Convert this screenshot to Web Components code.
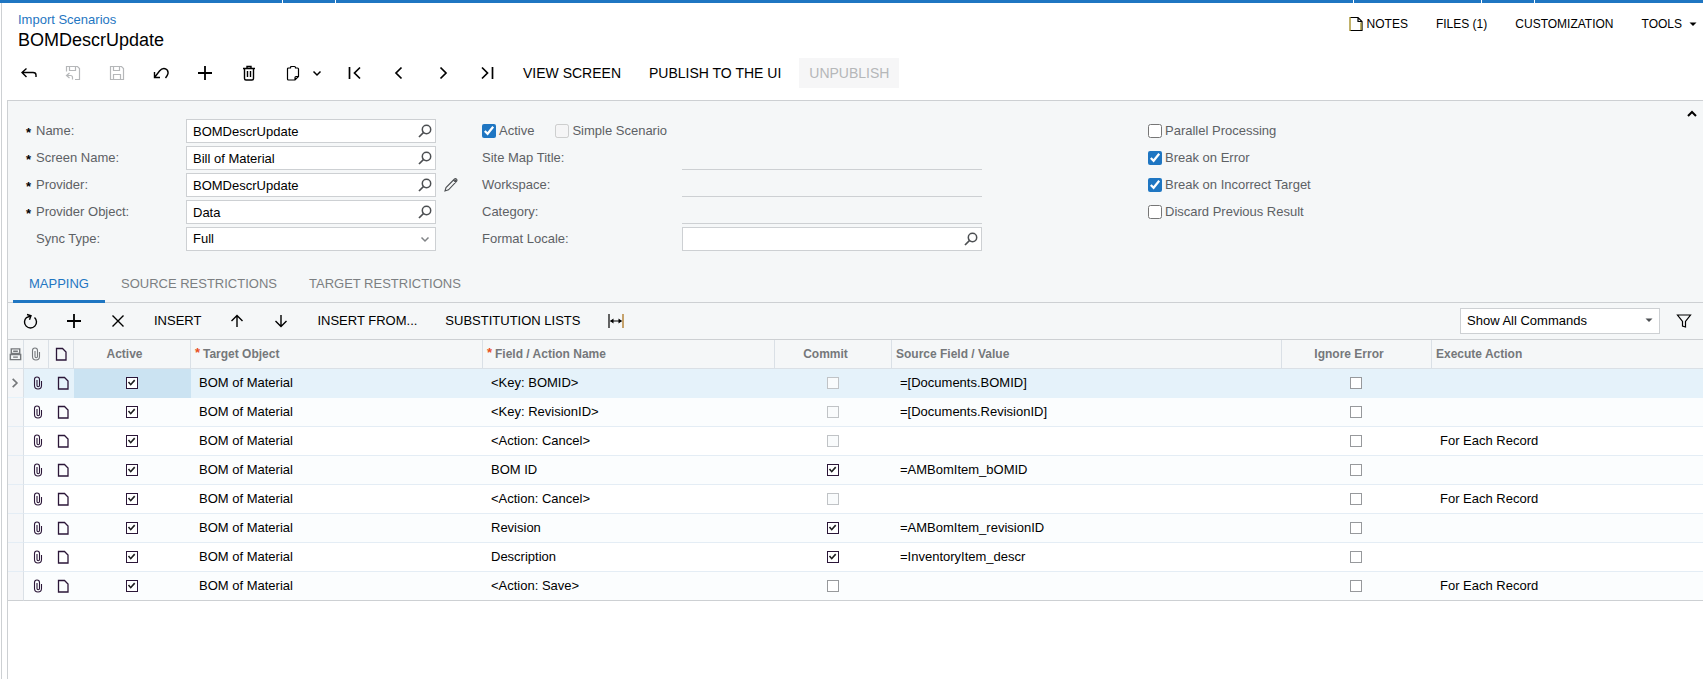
<!DOCTYPE html>
<html lang="en">
<head>
<meta charset="utf-8">
<title>Import Scenarios</title>
<style>
  body {
    margin: 0;
    background: #fff;
    color: #000;
    font: 13px/16px "Liberation Sans", Arial, sans-serif;
    --accent: #1f76c2;
    --line: #cdd0d3;
    --panel: #f5f7f8;
    --muted: #5d6165;
  }
</style>
</head>
<body>
<app-frame>
  <screen-header heading="BOMDescrUpdate" parent="Import Scenarios"></screen-header>
  <tool-bar>
    <tool-button icon="back" label="Back"></tool-button>
    <tool-button icon="saveclose" label="Save and close" disabled></tool-button>
    <tool-button icon="save" label="Save" disabled></tool-button>
    <tool-button icon="undo" label="Undo"></tool-button>
    <tool-button icon="plus" label="Add record"></tool-button>
    <tool-button icon="trash" label="Delete"></tool-button>
    <tool-button icon="clipboard" label="Clipboard" menu></tool-button>
    <tool-button icon="first" label="First"></tool-button>
    <tool-button icon="prev" label="Previous"></tool-button>
    <tool-button icon="next" label="Next"></tool-button>
    <tool-button icon="last" label="Last"></tool-button>
    <tool-button>VIEW SCREEN</tool-button>
    <tool-button>PUBLISH TO THE UI</tool-button>
    <tool-button disabled>UNPUBLISH</tool-button>
  </tool-bar>
  <scenario-panel slot="panel">
    <scenario-form></scenario-form>
    <tab-strip></tab-strip>
    <tool-bar compact>
      <tool-button icon="refresh" label="Refresh"></tool-button>
      <tool-button icon="plus" label="Add row"></tool-button>
      <tool-button icon="cross" label="Delete row"></tool-button>
      <tool-button>INSERT</tool-button>
      <tool-button icon="up" label="Move up"></tool-button>
      <tool-button icon="down" label="Move down"></tool-button>
      <tool-button>INSERT FROM...</tool-button>
      <tool-button>SUBSTITUTION LISTS</tool-button>
      <tool-button icon="fit" label="Fit to screen"></tool-button>
      <command-filter slot="end"></command-filter>
      <tool-button slot="end" icon="filter" label="Filter settings"></tool-button>
    </tool-bar>
    <mapping-grid></mapping-grid>
  </scenario-panel>
</app-frame>

<script>
const ICONS = {
  back: '<path d="M5.5 3.5L1 7.5l4.5 4.5M1 7.5h11q3 0 3 2.5v2"/>',
  saveclose: '<path stroke-width="1.2" d="M1.5 6.5v-5h11l2 2v11H10M4.5 1.5v4h6v-4M4.5 8L1.5 10.5l3 2.5M1.5 10.5h4q2 0 2 2v2"/>',
  save: '<path stroke-width="1.2" d="M1.5 1.5h11l2 2v11h-13zM4.5 1.5v4h6v-4M4.5 14.5v-5h7v5"/>',
  undo: '<path d="M1.5 7v5.5H7M1.5 12.5L6.5 6Q9 3 12 3.7 15.5 5 15 8.5 14.5 10.5 12.5 13"/>',
  plus: '<path stroke-width="1.8" d="M8 1v14M1 8h14"/>',
  trash: '<path d="M2 3.5h12M6 3V1.5h4V3M3.5 3.5v10q0 1.5 1.5 1.5h6q1.5 0 1.5-1.5v-10M6.5 6v6M9.5 6v6"/>',
  clipboard: '<path stroke-width="1.2" d="M5.500 3H3.5q-1 0-1 1v10q0 1 1 1h6.500l3.500-3.500V4q0-1-1-1h-2M5.500 3.500v-1q0-1 1-1h3q1 0 1 1v1M10 15v-2.500q0-1 1-1h2.500"/>',
  chevron: '<path stroke-width="1.5" d="M4.5 6.5L8 10l3.5-3.5"/>',
  collapse: '<path stroke-width="2" d="M4 10l4-4 4 4"/>',
  first: '<path stroke-width="1.7" d="M2.5 2v12M13 2.5L7.5 8l5.5 5.5"/>',
  prev: '<path stroke-width="1.7" d="M10.5 2.5L5 8l5.5 5.5"/>',
  next: '<path stroke-width="1.7" d="M5.5 2.5L11 8l-5.5 5.5"/>',
  last: '<path stroke-width="1.7" d="M13.5 2v12M3 2.5L8.5 8 3 13.5"/>',
  refresh: '<path d="M12.5 4.5A6 6 0 1 1 4.500 4.500L8.500 3M5 1.5l4 1.300-1.500 4"/>',
  cross: '<path d="M2.5 2.5l11 11M13.5 2.5l-11 11"/>',
  up: '<path d="M8 14V2.5M2.5 8L8 2.5 13.5 8"/>',
  down: '<path d="M8 2v11.5M2.5 8L8 13.5 13.5 8"/>',
  fit: '<path stroke-width="1.2" d="M1 1v14M2.5 8h11"/><path stroke="#a5690f" stroke-width="1.2" d="M15 1v14"/><path fill="currentColor" stroke="none" d="M2 8l3.5-2.5v5zM14 8l-3.5-2.5v5z"/>',
  filter: '<path stroke-width="1.2" d="M1.5 2h13l-5 6.5V14l-3-1V8.5z"/>',
  search: '<circle cx="9.5" cy="6.5" r="4.2" stroke-width="1.5"/><path stroke-width="1.7" d="M6.5 9.5L2 14"/>',
  pencil: '<path stroke-width="1.1" d="M2 14l1-3.5L11.5 2q1-.8 2 .2t.2 2L5.5 12.8zM10.5 3l2.5 2.500"/><path stroke-width="2" d="M12 3l1.200 1.200"/>',
  clip: '<path stroke-width="1.1" d="M9.500 10.500v-6a2.500 2.500 0 0 0-5 0v6a3.500 3.500 0 0 0 7 0V6M7 5v5.500a1.250 1.250 0 0 0 2.500 0"/>',
  note: '<path stroke-width="1.3" d="M3.5 2.5h6L13 6v8H3.5z"/>',
  notes: '<path stroke-width="1.2" d="M2 1.5h8L14 5.5v9H2M10 1.5v4h4"/><path stroke="#a8922c" stroke-width="1.4" d="M2 1v14M13 6.500V14"/>',
  caret: '<path fill="currentColor" stroke="none" d="M4.5 6.5h7L8 10z"/>',
  rows: '<path d="M3.500 2.5h9v5h-9zM2.5 8.500h11v5.500h-11zM5.500 5h5M5.500 11.300h5" stroke-width="1.500"/>',
  current: '<path stroke-width="1.8" d="M5 3.500L9.500 8 5 12.500"/>'
};

class IconGlyph extends HTMLElement {
  connectedCallback() {
    this.attachShadow({mode: 'open'}).innerHTML = `
      <style>
        :host { display: inline-flex; flex: none; width: 16px; height: 16px; }
      </style>
      <svg width="16" height="16" viewBox="0 0 16 16" fill="none" stroke="currentColor"
        stroke-width="1.4" aria-hidden="true">${ICONS[this.getAttribute('name')]}</svg>
    `;
  }
}
customElements.define('icon-glyph', IconGlyph);

class AppFrame extends HTMLElement {
  constructor() {
    super();
    this.attachShadow({mode: 'open'}).innerHTML = `
      <style>
        :host { display: flex; flex-direction: column; min-height: 100vh; }
        .strip { display: flex; height: 3px; background: var(--accent); }
        .strip i { width: 52px; border-right: 1px solid #fff; }
        .strip i.wide { width: 127px; }
        .strip i.first { width: 282px; }
        .strip i.fill { flex: 1; }
        .strip i.end { width: 168px; border: 0; }
        main {
          flex: 1;
          display: flex;
          flex-direction: column;
          margin-left: 1px;
          padding-left: 5px;
          border-left: 1px solid var(--line);
        }
      </style>
      <div class="strip">
        <i class="first"></i><i></i><i class="fill"></i><i class="wide"></i><i></i><i class="end"></i>
      </div>
      <main><slot></slot><slot name="panel"></slot></main>
    `;
  }
}
customElements.define('app-frame', AppFrame);

class ScreenHeader extends HTMLElement {
  connectedCallback() {
    this.attachShadow({mode: 'open'}).innerHTML = `
      <style>
        :host {
          display: flex;
          justify-content: space-between;
          align-items: flex-start;
          padding: 9px 6px 0 11px;
        }
        a { color: var(--accent); text-decoration: none; }
        h1 { margin: 1px 0 0; font-size: 18px; line-height: 22px; font-weight: normal; }
        nav { display: flex; gap: 28px; padding-top: 4px; }
        nav button {
          display: flex;
          align-items: center;
          gap: 3px;
          padding: 0;
          border: 0;
          background: none;
          color: #000;
          font: 12px/16px "Liberation Sans", Arial, sans-serif;
        }
        nav [name=caret] { margin-right: -4px; }
      </style>
      <div>
        <a href="#">${this.getAttribute('parent')}</a>
        <h1>${this.getAttribute('heading')}</h1>
      </div>
      <nav>
        <button><icon-glyph name="notes"></icon-glyph>NOTES</button>
        <button>FILES (1)</button>
        <button>CUSTOMIZATION</button>
        <button>TOOLS<icon-glyph name="caret"></icon-glyph></button>
      </nav>
    `;
  }
}
customElements.define('screen-header', ScreenHeader);

class ToolBar extends HTMLElement {
  constructor() {
    super();
    this.attachShadow({mode: 'open'}).innerHTML = `
      <style>
        :host {
          display: flex;
          align-items: center;
          gap: 8px;
          height: 30px;
          padding: 7px 0 12px 4px;
          font-size: 14px;
        }
        :host([compact]) {
          height: 36px;
          padding: 0 1px 0 4px;
          border-bottom: 1px solid var(--line);
          font-size: 13px;
        }
        .end { display: flex; align-items: center; gap: 6px; margin-left: auto; }
      </style>
      <slot></slot>
      <div class="end"><slot name="end"></slot></div>
    `;
  }
}
customElements.define('tool-bar', ToolBar);

class ToolButton extends HTMLElement {
  connectedCallback() {
    let icon = this.getAttribute('icon');
    this.attachShadow({mode: 'open'}).innerHTML = `
      <style>
        :host { display: block; flex: none; }
        button {
          display: flex;
          align-items: center;
          height: 30px;
          padding: 0 10px;
          border: 0;
          background: none;
          color: #000;
          font: inherit;
          white-space: nowrap;
        }
        button:disabled { color: #b5b7b9; }
        button.text:disabled { background: #f6f6f7; }
        .chevron { margin: 0 -6px 0 8px; }
      </style>
      <button class="${icon ? 'icon' : 'text'}">
        ${icon ? `<icon-glyph name="${icon}"></icon-glyph>` : ''}
        ${this.hasAttribute('menu') ? '<icon-glyph class="chevron" name="chevron"></icon-glyph>' : ''}
        <slot></slot>
      </button>
    `;
    let buttonElt = this.shadowRoot.querySelector('button');
    buttonElt.disabled = this.hasAttribute('disabled');
    if (icon) {
      buttonElt.setAttribute('aria-label', this.getAttribute('label'));
    }
  }
}
customElements.define('tool-button', ToolButton);

class ScenarioPanel extends HTMLElement {
  constructor() {
    super();
    this.attachShadow({mode: 'open'}).innerHTML = `
      <style>
        :host {
          display: block;
          flex: 1;
          border: solid var(--line);
          border-width: 1px 0 0 1px;
        }
        .top { background: var(--panel); }
      </style>
      <div class="top"><slot></slot></div>
    `;
  }
}
customElements.define('scenario-panel', ScenarioPanel);

class FormField extends HTMLElement {
  connectedCallback() {
    let kind = this.getAttribute('kind');
    let label = this.getAttribute('label');
    let value = this.getAttribute('value') || '';
    let control = kind == 'select'
      ? `<select id="control"><option>${value}</option></select>`
      : `<input id="control" type="text" value="${value}" ${kind == 'line' ? 'disabled' : ''}>`;
    let glyph = {select: 'chevron', lookup: 'search'}[kind];
    this.attachShadow({mode: 'open'}).innerHTML = `
      <style>
        :host { display: flex; height: 24px; }
        .mark { width: 10px; color: #000; font-weight: bold; line-height: 28px; }
        label { width: var(--label-width); color: var(--muted); line-height: 24px; }
        .box { position: relative; width: var(--field-width); }
        input, select {
          box-sizing: border-box;
          width: 100%;
          height: 24px;
          padding: 0 26px 0 6px;
          border: 1px solid var(--line);
          border-radius: 0;
          appearance: none;
          background: #fff;
          color: #000;
          font: inherit;
        }
        input:disabled { border-width: 0 0 1px; background: none; }
        .box icon-glyph { position: absolute; right: 3px; top: 4px; color: #4c4f52; }
        .box icon-glyph[name=chevron] { color: #808386; }
        slot { display: flex; align-items: center; margin-left: 7px; }
      </style>
      ${this.hasAttribute('marked') ? `<span class="mark">${this.hasAttribute('required') ? '*' : ''}</span>` : ''}
      <label for="control">${label}:</label>
      <div class="box">${control}${glyph ? `<icon-glyph name="${glyph}"></icon-glyph>` : ''}</div>
      <slot></slot>
    `;
  }
}
customElements.define('form-field', FormField);

class CheckField extends HTMLElement {
  connectedCallback() {
    this.attachShadow({mode: 'open'}).innerHTML = `
      <style>
        :host { display: flex; align-items: center; height: 24px; color: var(--muted); }
        input { flex: none; width: 14px; height: 14px; margin: 0; accent-color: var(--accent); }
        label { display: flex; align-items: center; gap: 3px; }
      </style>
      <label><input type="checkbox"><slot></slot></label>
    `;
    let inputElt = this.shadowRoot.querySelector('input');
    inputElt.checked = this.hasAttribute('checked');
    inputElt.disabled = this.hasAttribute('disabled');
  }
}
customElements.define('check-field', CheckField);

class ScenarioForm extends HTMLElement {
  constructor() {
    super();
    this.attachShadow({mode: 'open'}).innerHTML = `
      <style>
        :host {
          display: grid;
          grid-template-columns: 456px 666px 1fr auto;
          padding: 18px 3px 13px 18px;
        }
        .column { display: flex; flex-direction: column; gap: 3px; }
        .main { --label-width: 150px; --field-width: 250px; }
        .site { --label-width: 200px; --field-width: 300px; }
        .checks { display: flex; gap: 21px; }
        button {
          display: flex;
          align-self: start;
          margin-top: -13px;
          padding: 0;
          border: 0;
          background: none;
          color: #000;
        }
        .edit { align-self: center; margin: 0; color: #4c4f52; }
      </style>
      <div class="column main">
        <form-field marked required kind="lookup" label="Name" value="BOMDescrUpdate"></form-field>
        <form-field marked required kind="lookup" label="Screen Name" value="Bill of Material"></form-field>
        <form-field marked required kind="lookup" label="Provider" value="BOMDescrUpdate">
          <button class="edit" aria-label="Edit provider"><icon-glyph name="pencil"></icon-glyph></button>
        </form-field>
        <form-field marked required kind="lookup" label="Provider Object" value="Data"></form-field>
        <form-field marked kind="select" label="Sync Type" value="Full"></form-field>
      </div>
      <div class="column site">
        <div class="checks">
          <check-field checked>Active</check-field>
          <check-field disabled>Simple Scenario</check-field>
        </div>
        <form-field kind="line" label="Site Map Title"></form-field>
        <form-field kind="line" label="Workspace"></form-field>
        <form-field kind="line" label="Category"></form-field>
        <form-field kind="lookup" label="Format Locale"></form-field>
      </div>
      <div class="column">
        <check-field>Parallel Processing</check-field>
        <check-field checked>Break on Error</check-field>
        <check-field checked>Break on Incorrect Target</check-field>
        <check-field>Discard Previous Result</check-field>
      </div>
      <button aria-label="Collapse"><icon-glyph name="collapse"></icon-glyph></button>
    `;
  }
}
customElements.define('scenario-form', ScenarioForm);

class TabStrip extends HTMLElement {
  constructor() {
    super();
    this.attachShadow({mode: 'open'}).innerHTML = `
      <style>
        :host { display: flex; padding-left: 5px; border-bottom: 1px solid var(--line); }
        button {
          height: 39px;
          margin-bottom: -1px;
          padding: 4px 16px 0;
          border: 0;
          border-bottom: 3px solid transparent;
          background: none;
          color: #7c7f82;
          font: inherit;
        }
        button[aria-selected=true] { border-color: var(--accent); color: var(--accent); }
      </style>
      <button role="tab" aria-selected="true">MAPPING</button>
      <button role="tab">SOURCE RESTRICTIONS</button>
      <button role="tab">TARGET RESTRICTIONS</button>
    `;
  }
}
customElements.define('tab-strip', TabStrip);

class CommandFilter extends HTMLElement {
  constructor() {
    super();
    this.attachShadow({mode: 'open'}).innerHTML = `
      <style>
        :host { display: block; position: relative; width: 200px; }
        select {
          display: block;
          box-sizing: border-box;
          width: 100%;
          height: 26px;
          padding: 0 26px 0 6px;
          border: 1px solid var(--line);
          border-radius: 0;
          appearance: none;
          background: #fff;
          color: #000;
          font: inherit;
        }
        icon-glyph { position: absolute; right: 3px; top: 4px; color: #4c4f52; }
      </style>
      <select aria-label="Commands"><option>Show All Commands</option></select>
      <icon-glyph name="caret"></icon-glyph>
    `;
  }
}
customElements.define('command-filter', CommandFilter);

// commit: true = ticked, false = empty, missing = not editable
const ROWS = [
  {field: '<Key: BOMID>', source: '=[Documents.BOMID]'},
  {field: '<Key: RevisionID>', source: '=[Documents.RevisionID]'},
  {field: '<Action: Cancel>', execute: 'For Each Record'},
  {field: 'BOM ID', commit: true, source: '=AMBomItem_bOMID'},
  {field: '<Action: Cancel>', execute: 'For Each Record'},
  {field: 'Revision', commit: true, source: '=AMBomItem_revisionID'},
  {field: 'Description', commit: true, source: '=InventoryItem_descr'},
  {field: '<Action: Save>', commit: false, execute: 'For Each Record'}
];

class MappingGrid extends HTMLElement {
  constructor() {
    super();
    this.attachShadow({mode: 'open'}).innerHTML = `
      <style>
        :host { display: block; background: #fff; }
        table { width: 100%; table-layout: fixed; border-collapse: separate; border-spacing: 0; }
        th, td { box-sizing: border-box; height: 29px; padding: 0 8px; text-align: left; white-space: nowrap; }
        th {
          padding: 0 4px;
          border: solid #dae0e6;
          border-width: 0 1px 1px 0;
          background: var(--panel);
          color: #75787b;
          font-size: 12px;
        }
        th:last-child { border-right: 0; }
        th.center { padding-right: 19px; text-align: center; }
        th sup {
          display: inline-block;
          width: 8px;
          color: #e8501c;
          font-size: 13px;
          line-height: 12px;
          vertical-align: 1px;
        }
        td { border-bottom: 1px solid #e4edf5; }
        td.center { padding-right: 10px; text-align: center; }
        tr:nth-child(even) td { background: #fbfdfe; }
        tbody tr:first-child td { background: #e5f2fa; border-color: #e5f2fa; }
        tbody tr:first-child td.active { background: #cbe3f2; border-color: #cbe3f2; }
        tbody tr:last-child td { border-color: var(--line); }
        tbody tr td.selector { background: #f5f6f8; border-right: 1px solid #dae0e6; }
        th.tool, td.tool { padding: 0; text-align: center; color: #2b1638; }
        th.tool.grey, td.selector { color: #75787b; }
        icon-glyph { display: flex; margin: 0 auto; }
        th.selector icon-glyph, td.selector icon-glyph { width: 15px; }
        button { display: block; width: 16px; margin: 0 auto; padding: 0; border: 0; background: none; color: inherit; }
        td button { width: 18px; padding-left: 2px; }
        input {
          display: block;
          width: 12px;
          height: 12px;
          box-sizing: border-box;
          margin: 0 auto;
          border: 1px solid #97999c;
          appearance: none;
          background: #fff;
        }
        input:disabled { border-color: #c0c3c6; background: #f9fbfc; }
        input:checked { border-color: #2b1638; }
        input:checked::before {
          content: "";
          display: block;
          width: 10px;
          height: 10px;
          background: #1d1d1f;
          clip-path: polygon(14% 46%, 26% 36%, 42% 54%, 76% 16%, 88% 28%, 42% 78%);
        }
      </style>
      <table>
        <colgroup>
          <col style="width: 16px"><col style="width: 25px"><col style="width: 25px">
          <col style="width: 117px"><col style="width: 292px"><col style="width: 292px">
          <col style="width: 117px"><col style="width: 390px"><col style="width: 150px"><col>
        </colgroup>
        <thead>
          <tr>
            <th class="tool grey selector"><icon-glyph name="rows"></icon-glyph></th>
            <th class="tool grey"><icon-glyph name="clip"></icon-glyph></th>
            <th class="tool"><icon-glyph name="note"></icon-glyph></th>
            <th class="center">Active</th>
            <th><sup>*</sup>Target Object</th>
            <th><sup>*</sup>Field / Action Name</th>
            <th class="center">Commit</th>
            <th>Source Field / Value</th>
            <th class="center">Ignore Error</th>
            <th>Execute Action</th>
          </tr>
        </thead>
        <tbody></tbody>
      </table>
    `;
  }

  connectedCallback() {
    let bodyElt = this.shadowRoot.querySelector('tbody');
    ROWS.forEach((row, i) => {
      let rowElt = document.createElement('tr');
      rowElt.innerHTML = `
        <td class="tool selector">${i ? '' : '<icon-glyph name="current"></icon-glyph>'}</td>
        <td class="tool"><button aria-label="Files"><icon-glyph name="clip"></icon-glyph></button></td>
        <td class="tool"><button aria-label="Note"><icon-glyph name="note"></icon-glyph></button></td>
        <td class="center active"><input type="checkbox" aria-label="Active" checked></td>
        <td>BOM of Material</td>
        <td class="field"></td>
        <td class="center"><input type="checkbox" aria-label="Commit"></td>
        <td class="source"></td>
        <td class="center"><input type="checkbox" aria-label="Ignore Error"></td>
        <td class="execute"></td>
      `;
      let commitElt = rowElt.querySelector('[aria-label=Commit]');
      commitElt.checked = row.commit === true;
      commitElt.disabled = row.commit === undefined;
      for (let key of ['field', 'source', 'execute']) {
        rowElt.querySelector('.' + key).textContent = row[key] || '';
      }
      bodyElt.appendChild(rowElt);
    });
  }
}
customElements.define('mapping-grid', MappingGrid);
</script>
</body>
</html>
